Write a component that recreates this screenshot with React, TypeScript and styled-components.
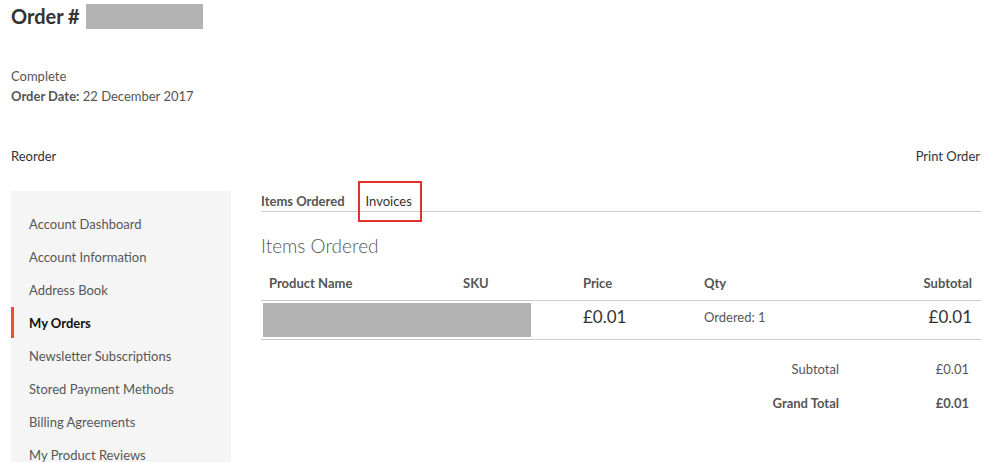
import React from 'react';
import styled, { createGlobalStyle } from 'styled-components';

const GlobalStyle = createGlobalStyle`
  html, body {
    margin: 0;
    padding: 0;
    overflow: hidden;
    background: #fff;
  }
  body {
    font-family: Lato, "Open Sans", "Liberation Sans", sans-serif;
    color: #333;
  }
`;

const Page = styled.div`
  padding: 4px 21px 0 11px;
`;

const Title = styled.h1`
  margin: 0;
  font-size: 20px;
  line-height: 25px;
  font-weight: 700;
  color: #333;
  display: flex;
  align-items: center;
`;

const Redacted = styled.span<{ w: number; h: number }>`
  display: block;
  width: ${({ w }) => w}px;
  height: ${({ h }) => h}px;
  background: #b3b3b3;
`;

const TitleMask = styled(Redacted)`
  margin-left: 6px;
`;

const Info = styled.div`
  margin-top: 38px;
  font-size: 13px;
  line-height: 19.5px;
  color: #555;
`;

const Label = styled.span`
  font-weight: 700;
`;

const Actions = styled.div`
  margin-top: 40px;
  padding-right: 1px;
  display: flex;
  justify-content: space-between;
  font-size: 13px;
  line-height: 20px;
  color: #333;
`;

const Layout = styled.div`
  margin-top: 25px;
  display: flex;
  gap: 30px;
  align-items: flex-start;
`;

const Sidebar = styled.ul`
  list-style: none;
  margin: 0;
  width: 220px;
  flex: none;
  background: #f5f5f5;
  padding: 17px 0 40px;
`;

const NavItem = styled.li<{ active?: boolean }>`
  height: 31px;
  margin-bottom: 2px;
  display: flex;
  align-items: center;
  font-size: 13px;
  padding-left: ${({ active }) => (active ? '15px' : '18px')};
  border-left: ${({ active }) => (active ? '3px solid #e8502f' : 'none')};
  font-weight: ${({ active }) => (active ? 700 : 400)};
  color: ${({ active }) => (active ? '#111' : '#575757')};
`;

const Main = styled.div`
  flex: 1;
  min-width: 0;
`;

const Tabs = styled.div`
  display: flex;
  gap: 21px;
  border-bottom: 1px solid #ccc;
  font-size: 13px;
  line-height: 20px;
`;

const Tab = styled.div<{ active?: boolean }>`
  position: relative;
  font-weight: ${({ active }) => (active ? 700 : 400)};
  color: ${({ active }) => (active ? '#555' : '#333')};
`;

const Highlight = styled.span`
  position: absolute;
  top: -10px;
  bottom: -11px;
  left: -8px;
  right: -10px;
  border: 2px solid #e2312b;
`;

const SectionTitle = styled.h2`
  margin: 22px 0 9px;
  font-size: 19px;
  line-height: 23px;
  font-weight: 300;
  color: #575757;
`;

const Table = styled.table`
  width: 100%;
  border-collapse: collapse;
  table-layout: fixed;
`;

const Th = styled.th<{ right?: boolean }>`
  text-align: ${({ right }) => (right ? 'right' : 'left')};
  font-size: 13px;
  line-height: 18px;
  font-weight: 700;
  color: #555;
  padding: 8px ${({ right }) => (right ? '9px' : '0')} 8px 8px;
  border-bottom: 1px solid #ccc;
`;

const Td = styled.td<{ right?: boolean; big?: boolean }>`
  vertical-align: top;
  text-align: ${({ right }) => (right ? 'right' : 'left')};
  font-size: ${({ big }) => (big ? '17px' : '13px')};
  line-height: 20px;
  color: ${({ big }) => (big ? '#333' : '#575757')};
  padding: 6px ${({ right }) => (right ? '9px' : '0')} 0 8px;
  border-bottom: 1px solid #ccc;
`;

const MaskCell = styled.td`
  padding: 2px 0 2px 2px;
  border-bottom: 1px solid #ccc;
  vertical-align: top;
`;

const Totals = styled.div`
  margin-top: 12px;
  display: grid;
  grid-template-columns: 1fr 142px;
  font-size: 13px;
  line-height: 20px;
  color: #555;
`;

const TotalCell = styled.div<{ strong?: boolean; value?: boolean }>`
  padding: 7px ${({ value }) => (value ? '12px' : '0')} 7px 0;
  text-align: right;
  font-weight: ${({ strong }) => (strong ? 700 : 400)};
`;

const nav = [
  'Account Dashboard',
  'Account Information',
  'Address Book',
  'My Orders',
  'Newsletter Subscriptions',
  'Stored Payment Methods',
  'Billing Agreements',
  'My Product Reviews',
];

export default function App() {
  return (
    <>
      <GlobalStyle />
      <Page>
        <Title>
          Order #<TitleMask w={117} h={25} />
        </Title>
        <Info>
          <div>Complete</div>
          <div>
            <Label>Order Date:</Label> 22 December 2017
          </div>
        </Info>
        <Actions>
          <span>Reorder</span>
          <span>Print Order</span>
        </Actions>
        <Layout>
          <Sidebar>
            {nav.map((n) => (
              <NavItem key={n} active={n === 'My Orders'}>
                {n}
              </NavItem>
            ))}
          </Sidebar>
          <Main>
            <Tabs>
              <Tab active>Items Ordered</Tab>
              <Tab>
                Invoices
                <Highlight />
              </Tab>
            </Tabs>
            <SectionTitle>Items Ordered</SectionTitle>
            <Table>
              <colgroup>
                <col style={{ width: 194 }} />
                <col style={{ width: 120 }} />
                <col style={{ width: 121 }} />
                <col />
                <col style={{ width: 120 }} />
              </colgroup>
              <thead>
                <tr>
                  <Th>Product Name</Th>
                  <Th>SKU</Th>
                  <Th>Price</Th>
                  <Th>Qty</Th>
                  <Th right>Subtotal</Th>
                </tr>
              </thead>
              <tbody>
                <tr>
                  <MaskCell colSpan={2}>
                    <Redacted w={268} h={34} />
                  </MaskCell>
                  <Td big>£0.01</Td>
                  <Td>Ordered: 1</Td>
                  <Td big right>
                    £0.01
                  </Td>
                </tr>
              </tbody>
            </Table>
            <Totals>
              <TotalCell>Subtotal</TotalCell>
              <TotalCell value>£0.01</TotalCell>
              <TotalCell strong>Grand Total</TotalCell>
              <TotalCell strong value>
                £0.01
              </TotalCell>
            </Totals>
          </Main>
        </Layout>
      </Page>
    </>
  );
}
